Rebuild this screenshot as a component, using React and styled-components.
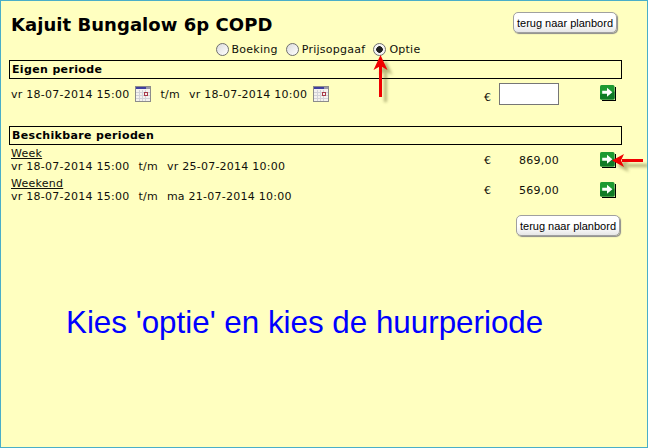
import styled, { createGlobalStyle } from "styled-components";

const GlobalStyle = createGlobalStyle`
  html, body { margin: 0; padding: 0; background: #ffffc0; }
  body {
    font-family: "DejaVu Sans", Verdana, sans-serif;
    font-size: 11px;
    letter-spacing: 0.25px;
    color: #10100a;
  }
`;

const Page = styled.div`
  position: relative;
  width: 648px;
  height: 448px;
  box-sizing: border-box;
  border: 1px solid #4aaec8;
  background: #ffffc0;
  padding: 0 25px 0 8px;
  overflow: hidden;
`;

const Header = styled.div`
  display: flex;
  justify-content: space-between;
  align-items: flex-start;
  padding: 11px 5px 0 2px;
  height: 29px;
`;

const Title = styled.h1`
  margin: 0;
  padding-top: 2px;
  font-size: 18px;
  line-height: 22px;
  font-weight: bold;
  letter-spacing: 0.05px;
  color: #000;
`;

const BackButton = styled.button`
  box-sizing: border-box;
  width: 104px;
  height: 21px;
  padding: 0;
  font-family: "Liberation Sans", Arial, sans-serif;
  font-size: 11px;
  letter-spacing: 0;
  color: #000;
  background: linear-gradient(#ffffff 55%, #e6e6e6);
  border: 1px solid #a0a0a0;
  border-radius: 5px;
  box-shadow: 1px 1px 1px #8a8a8a;
  white-space: nowrap;
`;

const FooterButton = styled(BackButton)`
  margin: 10px 2px 0 0;
`;

const RadioRow = styled.div`
  display: flex;
  justify-content: center;
  align-items: center;
  gap: 8px;
  height: 19px;
  padding: 0 0 2px 5px;
  box-sizing: border-box;
`;

const RadioItem = styled.label`
  display: flex;
  align-items: center;
  gap: 3px;
`;

const RadioDot = styled.span`
  width: 13px;
  height: 13px;
  box-sizing: border-box;
  border-radius: 50%;
  border: 1px solid #6f6f6f;
  background: ${(p) =>
    p.$checked
      ? "radial-gradient(circle, #202020 0 3px, #f4f4f4 3.6px)"
      : "linear-gradient(135deg, #dcdcdc, #ffffff)"};
  flex: none;
`;

const SectionTitle = styled.div`
  box-sizing: border-box;
  height: 19px;
  border: 1px solid #000;
  padding: 0 2px;
  font-weight: bold;
  font-size: 11px;
  line-height: 17px;
  color: #000;
  letter-spacing: 0.35px;
`;

const Row = styled.div`
  display: flex;
  align-items: center;
  box-sizing: border-box;
  padding-left: 2px;
  height: 30px;
`;

const PeriodInfo = styled.div`
  flex: 1;
  display: flex;
  flex-direction: column;
  line-height: 13px;
`;

const PeriodLine = styled.div`
  display: flex;
  align-items: center;
  white-space: pre;
`;

const PeriodLink = styled.a`
  color: #10100a;
  text-decoration: underline;
  align-self: flex-start;
`;

const Calendar = styled.svg`
  flex: none;
  margin: 0 9px 0 6px;
`;

const Until = styled.span`
  margin: ${(p) => (p.$wide ? "0 9px" : "0 9px 0 0")};
`;

const Euro = styled.span`
  width: 15px;
  margin-top: ${(p) => p.$drop || 0}px;
  flex: none;
`;

const Amount = styled.span`
  width: 60px;
  margin-right: 41px;
  flex: none;
  text-align: right;
`;

const PriceInput = styled.input`
  box-sizing: border-box;
  width: 60px;
  height: 22px;
  margin: 0 41px 0 0;
  padding: 0;
  background: #fff;
  border: 1px solid #767676;
  flex: none;
`;

const RowEnd = styled.div`
  display: flex;
  align-items: center;
  flex: none;
  padding-right: 6px;
  margin-bottom: ${(p) => p.$raise || 0}px;
`;

const Spacer = styled.div`
  height: ${(p) => p.$size}px;
`;

const FooterRow = styled.div`
  display: flex;
  justify-content: flex-end;
`;

const Notice = styled.div`
  margin: 69px 0 0 57px;
  font-family: "Liberation Sans", Arial, sans-serif;
  font-size: 31.35px;
  line-height: 36px;
  letter-spacing: 0;
  color: #0000ff;
  white-space: nowrap;
`;

const Overlay = styled.svg`
  position: absolute;
  overflow: visible;
  pointer-events: none;
  left: ${(p) => p.$x}px;
  top: ${(p) => p.$y}px;
`;

const CalendarIcon = () => (
  <Calendar width="16" height="16" viewBox="0 0 16 16">
    <rect x="0.5" y="0.5" width="15" height="15" fill="#f4f2ee" stroke="#8c8c8c" />
    <rect x="1" y="1" width="10" height="2" fill="#3f3f9f" />
    <rect x="11" y="1" width="4" height="2" fill="#9a9aa8" />
    <path d="M1 6.5H15M1 9.5H15M1 12.5H15M4.5 4V15M7.5 4V15M10.5 4V15" stroke="#d2d2d8" />
    <rect x="9.5" y="6.5" width="3" height="3" fill="#f4f2ee" stroke="#a83a4a" />
  </Calendar>
);

const GoIcon = () => (
  <svg width="16" height="16" viewBox="0 0 16 16">
    <path d="M15.5 2V15.5H2" fill="none" stroke="#000" strokeWidth="1.2" />
    <rect x="0" y="0" width="14.5" height="14.5" rx="1.5" fill="#1d9a32" />
    <path d="M0 9.5L14.5 6.5V13a1.5 1.5 0 0 1-1.5 1.5H1.5A1.5 1.5 0 0 1 0 13Z" fill="#0f7a26" />
    <path d="M2.2 5.8H7V2.8L12.4 7.3 7 11.8V8.8H2.2Z" fill="#fff" />
  </svg>
);

const Arrow = ({ x, y, width, height, line, head }) => (
  <Overlay $x={x} $y={y} width={width} height={height}>
    <defs>
      <filter id={`shade${x}`} x="-50%" y="-50%" width="200%" height="200%">
        <feGaussianBlur stdDeviation="1.6" />
      </filter>
    </defs>
    <g filter={`url(#shade${x})`} opacity="0.45" transform="translate(5 5)">
      <path d={line} stroke="#5a5a20" strokeWidth="3" fill="none" />
      <path d={head} fill="#5a5a20" />
    </g>
    <path d={line} stroke="#f00000" strokeWidth="3" fill="none" />
    <path d={head} fill="#f00000" />
  </Overlay>
);

const periods = [
  { name: "Week", until: "vr 25-07-2014 10:00", price: "869,00" },
  { name: "Weekend", until: "ma 21-07-2014 10:00", price: "569,00" },
];

export default function App() {
  return (
    <Page>
      <GlobalStyle />
      <Header>
        <Title>Kajuit Bungalow 6p COPD</Title>
        <BackButton>terug naar planbord</BackButton>
      </Header>

      <RadioRow>
        <RadioItem><RadioDot />Boeking</RadioItem>
        <RadioItem><RadioDot />Prijsopgaaf</RadioItem>
        <RadioItem><RadioDot $checked />Optie</RadioItem>
      </RadioRow>

      <SectionTitle>Eigen periode</SectionTitle>
      <Row>
        <PeriodInfo>
          <PeriodLine>
            vr 18-07-2014 15:00<CalendarIcon /><Until>t/m</Until>vr 18-07-2014 10:00<CalendarIcon />
          </PeriodLine>
        </PeriodInfo>
        <Euro $drop={6}>€</Euro>
        <PriceInput />
        <RowEnd $raise={2}><GoIcon /></RowEnd>
      </Row>

      <Spacer $size={17} />

      <SectionTitle>Beschikbare perioden</SectionTitle>
      {periods.map((period) => (
        <Row key={period.name}>
          <PeriodInfo>
            <PeriodLink>{period.name}</PeriodLink>
            <PeriodLine>vr 18-07-2014 15:00<Until $wide>t/m</Until>{period.until}</PeriodLine>
          </PeriodInfo>
          <Euro>€</Euro>
          <Amount>{period.price}</Amount>
          <RowEnd><GoIcon /></RowEnd>
        </Row>
      ))}

      <FooterRow>
        <FooterButton>terug naar planbord</FooterButton>
      </FooterRow>

      <Notice>Kies 'optie' en kies de huurperiode</Notice>

      <Arrow
        x={370}
        y={52}
        width={20}
        height={46}
        line="M9.5 12V44"
        head="M9.5 2L16.5 17L9.5 13L2.5 17Z"
      />
      <Arrow
        x={609}
        y={150}
        width={34}
        height={20}
        line="M12 9.5H33"
        head="M2 9.5L14 3L11 9.5L14 16Z"
      />
    </Page>
  );
}
